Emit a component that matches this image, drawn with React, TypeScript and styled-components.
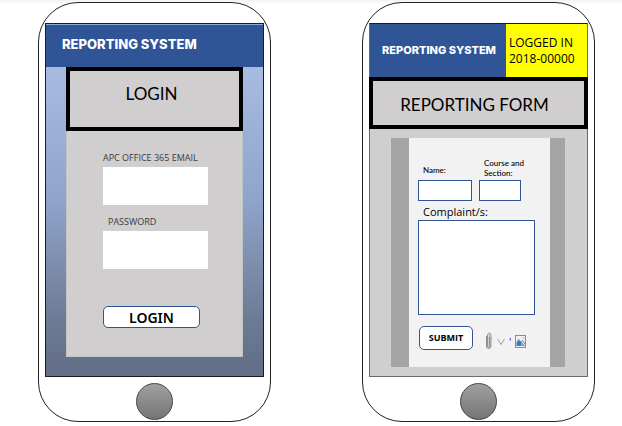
import React from "react";
import styled, { createGlobalStyle } from "styled-components";

const GlobalStyle = createGlobalStyle`
  *, *::before, *::after { box-sizing: border-box; }
  body {
    margin: 0;
    background: linear-gradient(#f3f3f3, #ffffff 5px) #ffffff;
    background-repeat: no-repeat;
    color: #000;
    font-family: "Lato", "Open Sans", sans-serif;
  }
`;

const Page = styled.main`
  display: grid;
  grid-template-columns: 1fr 1fr;
  column-gap: 91px;
  align-items: start;
  padding: 2px 27px 4px 38px;
`;

const PhoneBody = styled.section`
  display: flex;
  flex-direction: column;
  align-items: stretch;
  padding: 20px 6px 1px;
  border: 1px solid #222;
  border-radius: 40px;
  background: #fff;
`;

const Screen = styled.div<{ $background: string; $edge: string }>`
  display: flex;
  flex-direction: column;
  border: 1px solid ${(p) => p.$edge};
  border-top-color: #1c1c1c;
  background: ${(p) => p.$background};
`;

const HomeButton = styled.button`
  align-self: center;
  width: 37px;
  height: 37px;
  margin-top: 6px;
  padding: 0;
  border: 1px solid #444;
  border-radius: 50%;
  background: linear-gradient(#a0a0a0, #757575);
`;

const Header = styled.header<{ $tall?: boolean }>`
  display: flex;
  height: ${(p) => (p.$tall ? 53 : 43)}px;
  border-top: 1px solid ${(p) => (p.$tall ? "#2f5597" : "#8faadc")};
  background: #2f5597;
`;

const Brand = styled.div<{ $small?: boolean }>`
  flex: 1;
  align-self: center;
  padding-left: ${(p) => (p.$small ? 12 : 16)}px;
  padding-bottom: ${(p) => (p.$small ? 2 : 4)}px;
  color: #fff;
  font: 800 ${(p) => (p.$small ? 11 : 13)}px/16px "Inter", "Liberation Sans", sans-serif;
  white-space: nowrap;
`;

const Account = styled.div`
  display: flex;
  flex-direction: column;
  justify-content: center;
  width: 81px;
  padding-left: 3px;
  margin-top: -1px;
  background: #ffff00;
  font: 400 12px/16px "Open Sans", sans-serif;
  white-space: nowrap;
`;

const Title = styled.h1<{ $height: number }>`
  display: flex;
  align-items: center;
  justify-content: center;
  height: ${(p) => p.$height}px;
  margin: 0 -1px;
  padding: 0 6px 10px 0;
  border: 4px solid #000;
  background: #d0cece;
  font-size: 17px;
  line-height: 24px;
  font-weight: 400;
  white-space: nowrap;
`;

const FormTitle = styled(Title)`
  padding: 4px 8px 0 0;
`;

const LoginPanel = styled.form`
  margin: 0 20px 19px;
  padding-bottom: 28px;
  border: 1px solid #c4c4c4;
  border-top: 0;
  background: #d0cece;
`;

const LoginFields = styled.div`
  display: flex;
  flex-direction: column;
  padding: 21px 34px 0 36px;
`;

const LoginLabel = styled.label<{ $inset?: boolean }>`
  height: 15px;
  padding-left: ${(p) => (p.$inset ? 5 : 0)}px;
  color: #3b3b3b;
  font: 400 9px/12px "Open Sans", sans-serif;
  white-space: nowrap;
`;

const LoginInput = styled.input`
  width: 100%;
  height: 38px;
  margin-bottom: 11px;
  padding: 0 6px;
  border: 0;
  background: #fff;
  font: inherit;
`;

const ActionButton = styled.button<{ $large?: boolean }>`
  width: ${(p) => (p.$large ? 97 : 54)}px;
  height: ${(p) => (p.$large ? 22 : 24)}px;
  margin-top: ${(p) => (p.$large ? 26 : 0)}px;
  padding: ${(p) => (p.$large ? 1 : 0)}px 0 0;
  border: 1px solid #2f5597;
  border-radius: 5px;
  background: #fff;
  color: #000;
  font: ${(p) => (p.$large ? '600 14px/18px "Noto Sans"' : '700 9px/12px "Open Sans"')}, sans-serif;
`;

const ReportPanel = styled.form`
  display: flex;
  flex-direction: column;
  margin: 9px 22px 9px 21px;
  padding: 20px 15px 17px 9px;
  border: solid #a5a5a5;
  border-width: 0 15px 0 18px;
  background: #f2f2f2;
`;

const ShortFields = styled.div`
  display: grid;
  grid-template-columns: minmax(0, 54fr) minmax(0, 42fr);
  column-gap: 7px;
  align-items: end;
  padding-right: 14px;
`;

const Field = styled.div`
  display: flex;
  flex-direction: column;
`;

const SmallLabel = styled.label<{ $single?: boolean }>`
  padding: ${(p) => (p.$single ? "0 0 5px 5px" : "0 0 2px 5px")};
  font-size: 8px;
  line-height: 10px;
  font-weight: 500;
  white-space: nowrap;
`;

const SmallInput = styled.input`
  width: 100%;
  height: 21px;
  padding: 0 3px;
  border: 1px solid #2f5597;
  background: #fff;
  font-size: 9px;
`;

const ComplaintLabel = styled.label`
  padding: 3px 0 0 5px;
  font: 400 11px/16px "Open Sans", sans-serif;
`;

const Complaint = styled.textarea`
  width: 100%;
  height: 95px;
  padding: 3px;
  border: 1px solid #2f5597;
  background: #fff;
  font-size: 10px;
  resize: none;
`;

const Actions = styled.div`
  display: flex;
  align-items: flex-start;
  margin-top: 11px;
  padding-left: 1px;
`;

const IconStrip = styled.svg`
  display: block;
  width: 42px;
  height: 18px;
  margin: 6px 0 0 12px;
  flex: none;
`;

function AttachmentIcons() {
  return (
    <IconStrip viewBox="0 0 42 18" aria-label="Attachments" role="img">
      <path d="M1.5 4v10c0 3.5 4.5 3.5 4.5 0V4c0-4-3.5-4-3.5 0v10c0 1.5 2 1.5 2 0V5" fill="#d2d2d2" stroke="#8f8f8f" strokeWidth="1" />
      <path d="M12.5 7l3.5 5.500 3.5-5.500" fill="none" stroke="#a0a0a0" />
      <path d="M25.300 6v2.500" stroke="#5a5aff" strokeWidth="1.2" />
      <rect x="30.5" y="3.5" width="10" height="12" fill="#f0f0f0" stroke="#8c8c8c" />
      <path d="M31.500 14v-3.500l2.500-2.500 2.500 3v3z" fill="#2f7bd8" />
      <path d="M32 9.500l1.700-2 6 6.500M36 10.500l1.500-2 2.500 3.500" fill="none" stroke="#858585" />
      <path d="M37 13.800v-2l2.500 2z" fill="#5d91ca" />
      <circle cx="38.5" cy="6" r="1" fill="#c8c8c8" />
    </IconStrip>
  );
}

function Phone({ name, background, edge, children }: {
  name: string;
  background: string;
  edge: string;
  children: React.ReactNode;
}) {
  return (
    <PhoneBody aria-label={name}>
      <Screen $background={background} $edge={edge}>{children}</Screen>
      <HomeButton type="button" aria-label="Home" />
    </PhoneBody>
  );
}

export default function App() {
  return (
    <>
      <GlobalStyle />
      <Page>
        <Phone name="Login screen" background="linear-gradient(#b0c4ea, #a8bce2 12%, #8ea4cb 50%, #8091b0 66%, #6c7b95 84%, #626d87)" edge="#1c1c1c">
          <Header><Brand>REPORTING SYSTEM</Brand></Header>
          <LoginPanel onSubmit={(e) => e.preventDefault()}>
            <Title $height={64}>LOGIN</Title>
            <LoginFields>
              <LoginLabel htmlFor="email">APC OFFICE 365 EMAIL</LoginLabel>
              <LoginInput id="email" type="email" />
              <LoginLabel htmlFor="password" $inset>PASSWORD</LoginLabel>
              <LoginInput id="password" type="password" />
              <ActionButton type="submit" $large>LOGIN</ActionButton>
            </LoginFields>
          </LoginPanel>
        </Phone>
        <Phone name="Report screen" background="#d0cece" edge="#6b6b6b">
          <Header $tall>
            <Brand $small>REPORTING SYSTEM</Brand>
            <Account><span>LOGGED IN</span><span>2018-00000</span></Account>
          </Header>
          <FormTitle $height={52}>REPORTING FORM</FormTitle>
          <ReportPanel onSubmit={(e) => e.preventDefault()}>
            <ShortFields>
              <Field>
                <SmallLabel htmlFor="name" $single>Name:</SmallLabel>
                <SmallInput id="name" type="text" />
              </Field>
              <Field>
                <SmallLabel htmlFor="course">Course and<br />Section:</SmallLabel>
                <SmallInput id="course" type="text" />
              </Field>
            </ShortFields>
            <ComplaintLabel htmlFor="complaint">Complaint/s:</ComplaintLabel>
            <Complaint id="complaint" />
            <Actions>
              <ActionButton type="submit">SUBMIT</ActionButton>
              <AttachmentIcons />
            </Actions>
          </ReportPanel>
        </Phone>
      </Page>
    </>
  );
}
